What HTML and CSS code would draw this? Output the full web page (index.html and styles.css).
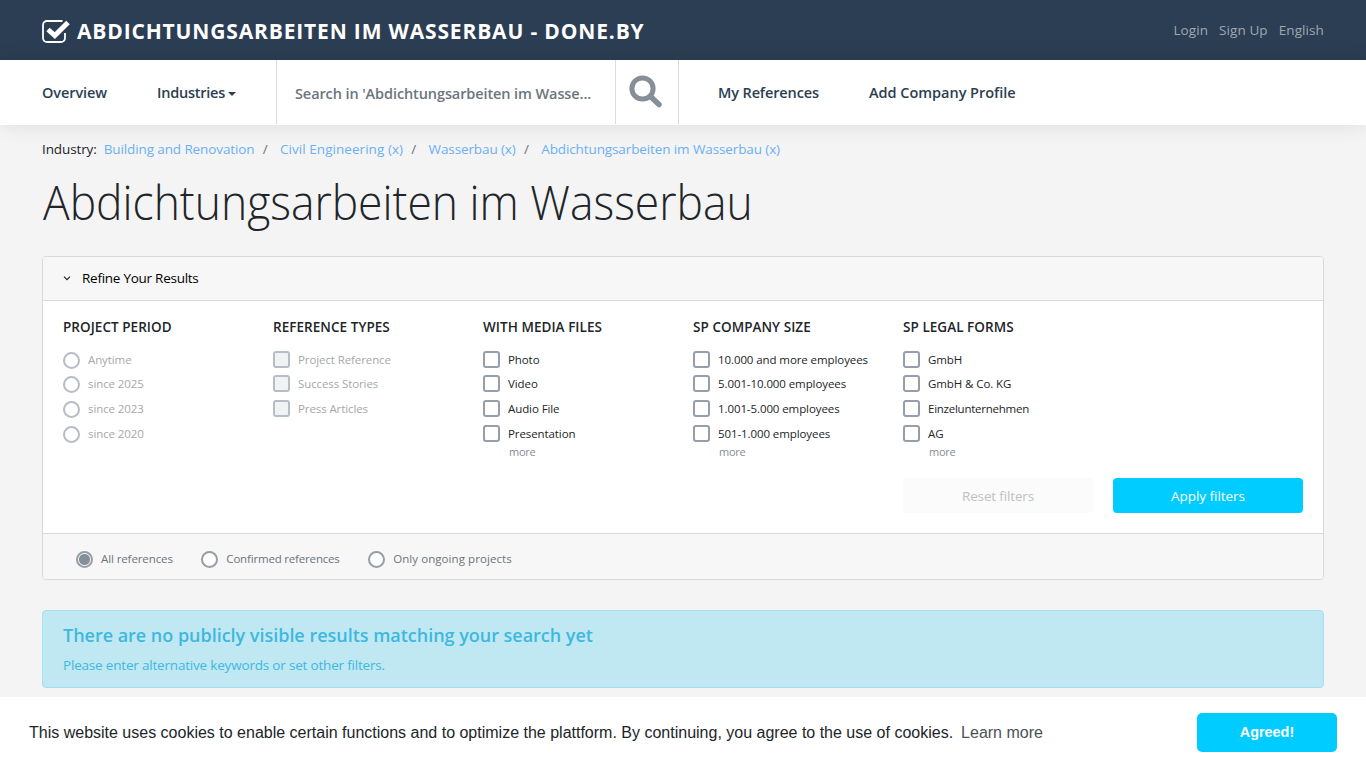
FILE: index.html
```html
<!DOCTYPE html>
<html lang="en">
<head>
<meta charset="utf-8">
<title>Abdichtungsarbeiten im Wasserbau - done.by</title>
<link rel="stylesheet" href="styles.css">
</head>
<body>
<header class="topbar">
  <a class="brand"><svg class="brand-icon" width="28" height="25" viewBox="0 0 28 25"><path d="M20.500 2H5a4 4 0 0 0-4 4v13a4 4 0 0 0 4 4h14a4 4 0 0 0 4-4v-5" fill="none" stroke="#fff" stroke-width="1.800"/><path d="M6 10.500l6.800 6L26 3.500" fill="none" stroke="#fff" stroke-width="5"/></svg><span class="brand-name">ABDICHTUNGSARBEITEN IM WASSERBAU - DONE.BY</span></a>
  <nav class="account"><a>Login</a><a>Sign Up</a><a>English</a></nav>
</header>
<nav class="mainnav">
  <a class="nav-overview">Overview</a>
  <a class="nav-industries"><span>Industries</span><i class="caret"></i></a>
  <div class="search"><span class="search-text">Search in 'Abdichtungsarbeiten im Wasse...</span><span class="search-btn"><svg width="34" height="34" viewBox="0 0 34 34"><circle cx="13.500" cy="13.500" r="10.600" fill="none" stroke="#868e96" stroke-width="5"/><path d="M21.500 21.500L30 29.500" stroke="#868e96" stroke-width="5.500" stroke-linecap="round"/></svg></span></div>
  <a class="nav-refs">My References</a>
  <a class="nav-add">Add Company Profile</a>
</nav>
<main class="page">
  <div class="crumbs"><span class="crumb-label">Industry:</span><a>Building and Renovation</a><i>/</i><a class="crumb-wide">Civil Engineering (x)</a><i>/</i><a>Wasserbau (x)</a><i>/</i><a>Abdichtungsarbeiten im Wasserbau (x)</a></div>
  <h1><span>Abdichtungsarbeiten im Wasserbau</span></h1>
  <section class="card">
    <div class="card-head"><svg width="8" height="5" viewBox="0 0 8 5"><path d="M1 .7l3 3 3-3" fill="none" stroke="#212529" stroke-width="1.200"/></svg><span>Refine Your Results</span></div>
    <div class="card-body">
      <div class="filters">
        <div class="group disabled"><h2>PROJECT PERIOD</h2>
          <label><i class="radio"></i><span>Anytime</span></label><label><i class="radio"></i><span>since 2025</span></label><label><i class="radio"></i><span>since 2023</span></label><label><i class="radio"></i><span>since 2020</span></label></div>
        <div class="group disabled"><h2>REFERENCE TYPES</h2>
          <label><i class="check"></i><span>Project Reference</span></label><label><i class="check"></i><span>Success Stories</span></label><label><i class="check"></i><span>Press Articles</span></label></div>
        <div class="group"><h2>WITH MEDIA FILES</h2>
          <label><i class="check"></i><span>Photo</span></label><label><i class="check"></i><span>Video</span></label><label><i class="check"></i><span>Audio File</span></label><label><i class="check"></i><span>Presentation</span></label><a class="more">more</a></div>
        <div class="group"><h2>SP COMPANY SIZE</h2>
          <label><i class="check"></i><span>10.000 and more employees</span></label><label><i class="check"></i><span>5.001-10.000 employees</span></label><label><i class="check"></i><span>1.001-5.000 employees</span></label><label><i class="check"></i><span>501-1.000 employees</span></label><a class="more">more</a></div>
        <div class="group"><h2>SP LEGAL FORMS</h2>
          <label><i class="check"></i><span>GmbH</span></label><label><i class="check"></i><span>GmbH &amp; Co. KG</span></label><label><i class="check"></i><span class="tight">Einzelunternehmen</span></label><label><i class="check"></i><span>AG</span></label><a class="more">more</a></div>
      </div>
      <div class="actions"><span class="btn reset">Reset filters</span><span class="btn apply">Apply filters</span></div>
    </div>
    <div class="card-foot"><label><i class="radio on"></i><span>All references</span></label><label><i class="radio"></i><span class="tight">Confirmed references</span></label><label><i class="radio"></i><span class="loose">Only ongoing projects</span></label></div>
  </section>
  <section class="alert"><h3>There are no publicly visible results matching your search yet</h3><p>Please enter alternative keywords or set other filters.</p></section>
</main>
<div class="cookies"><span class="cookie-text">This website uses cookies to enable certain functions and to optimize the plattform. By continuing, you agree to the use of cookies.</span><a class="cookie-link">Learn more</a><span class="agree">Agreed!</span></div>
</body>
</html>
```
FILE: styles.css
```css
* { box-sizing: border-box; }
body { margin: 0; height: 768px; overflow: hidden; background: #f4f4f4; color: #212529; font: 14px/21px "Open Sans", "Noto Sans", sans-serif; }
h1, h2, h3, p { margin: 0; }
i { font-style: normal; }
span, a { white-space: nowrap; }

.topbar { height: 60px; padding: 0 42px; display: flex; justify-content: space-between; align-items: center; background: #2c3e53; }
.brand { display: flex; align-items: center; gap: 7px; color: #fff; font-size: 21px; font-weight: 700; letter-spacing: .84px; padding-top: 3px; }
.brand-icon { display: block; }
.account { display: flex; gap: 11px; color: #a0a8b1; font-size: 13.500px; font-weight: 500; letter-spacing: .09px; }

.mainnav { height: 65px; padding-left: 42px; display: flex; align-items: center; background: #fff; color: #2c3e50; font-size: 14.500px; font-weight: 600; letter-spacing: -.08px; box-shadow: 0 0 20px rgba(0,0,0,.1); position: relative; }
.nav-overview { width: 115px; }
.nav-industries { width: 119px; display: flex; align-items: center; gap: 3px; }
.nav-industries span { letter-spacing: -.24px; }
.caret { border: 4px solid transparent; border-top-color: #2c3e50; border-bottom: 0; margin-top: 3px; }
.search { width: 403px; height: 64px; align-self: flex-start; display: flex; align-items: center; border: solid #dcdcdc; border-width: 0 1px; }
.search-text { width: 338px; padding: 3px 0 0 18px; color: #6c757d; letter-spacing: -.1px; }
.search-btn { flex: 1; align-self: stretch; border-left: 1px solid #dcdcdc; padding: 15px 0 0 13px; }
.nav-refs { margin-left: 39px; width: 151px; letter-spacing: -.13px; }
.nav-add { letter-spacing: -.03px; }

.page { padding: 0 42px; }
.crumbs { display: flex; padding-top: 14px; height: 44px; font-size: 13.500px; letter-spacing: -.11px; }
.crumbs a { color: #6bb0f5; }
.crumbs i { color: #6c757d; padding: 0 12.500px 0 8.200px; }
.crumbs .crumb-wide { letter-spacing: .05px; }
.crumb-label { margin-right: 7px; }
h1 { height: 87px; padding: 4px 0 0 1px; font-size: 48px; line-height: 58px; font-weight: 300; }
h1 span { display: inline-block; transform: scaleX(.925); transform-origin: 0 0; }

.card { height: 324px; border: 1px solid #d9d9d9; border-radius: 4px; background: #fff; overflow: hidden; }
.card-head { height: 44px; display: flex; align-items: center; gap: 11px; padding-left: 20px; background: #f7f7f7; border-bottom: 1px solid #d9d9d9; color: #000; font-size: 13.500px; letter-spacing: -.26px; }
.card-body { height: 232px; padding: 16px 20px 0; }
.filters { display: grid; grid-template-columns: repeat(5, 210px); height: 161px; }
.group h2 { height: 29.900px; font-size: 13.500px; line-height: 21px; font-weight: 600; letter-spacing: .05px; }
.group label { display: flex; align-items: center; gap: 8px; height: 24.700px; font-size: 11.500px; letter-spacing: -.09px; }
.group.disabled label { color: #a6a8aa; letter-spacing: -.1px; }
.group .tight { letter-spacing: -.25px; }
.check, .radio { flex: none; width: 17px; height: 17px; border: 2px solid #959ea9; border-radius: 3px; background: #fff; }
.radio { border-radius: 50%; }
.group .radio { margin-top: 2px; }
.disabled i { border-color: #b7bdc5; }
.disabled .check { background: #f1f2f4; }
.radio.on { background: radial-gradient(circle, #868e96 5px, #f7f7f7 6px); }
.more { display: block; margin-left: 26px; font-size: 11px; line-height: 12px; letter-spacing: -.25px; color: #868e96; }
.actions { display: flex; justify-content: flex-end; gap: 20px; }
.btn { width: 190px; height: 35px; border-radius: 4px; text-align: center; line-height: 36px; font-size: 13.500px; letter-spacing: -.15px; }
.reset { background: #fbfbfb; color: #bfc1c3; }
.apply { background: #00ccff; color: #fff; font-weight: 500; letter-spacing: -.05px; }
.card-foot { height: 47px; display: flex; align-items: center; gap: 28.500px; padding: 3px 0 0 33px; background: #f7f7f7; border-top: 1px solid #d9d9d9; color: #6c757d; font-size: 11.500px; letter-spacing: -.1px; }
.card-foot label { display: flex; align-items: center; gap: 8px; height: 18px; }
.card-foot .radio { margin-top: 1px; }
.card-foot .tight { letter-spacing: -.18px; }
.card-foot .loose { letter-spacing: .07px; }

.alert { margin-top: 30px; height: 78px; padding: 12px 20px; border: 1px solid #a5dff0; border-radius: 4px; background: #bfe8f2; color: #3eb8df; font-size: 13.500px; letter-spacing: -.19px; }
.alert h3 { height: 32px; font-size: 18px; line-height: 24px; font-weight: 600; letter-spacing: -.02px; }

.cookies { position: fixed; left: 0; right: 0; bottom: 0; height: 71px; padding: 0 29px; display: flex; align-items: center; background: #fff; font: 16px/24px "Liberation Sans", Arial, sans-serif; }
.cookie-link { margin-left: 8px; color: #4d5154; }
.agree { margin-left: auto; width: 140px; height: 39px; border-radius: 5px; background: #00ccff; color: #fff; text-align: center; font-size: 14.400px; line-height: 39px; font-weight: 700; }
```
